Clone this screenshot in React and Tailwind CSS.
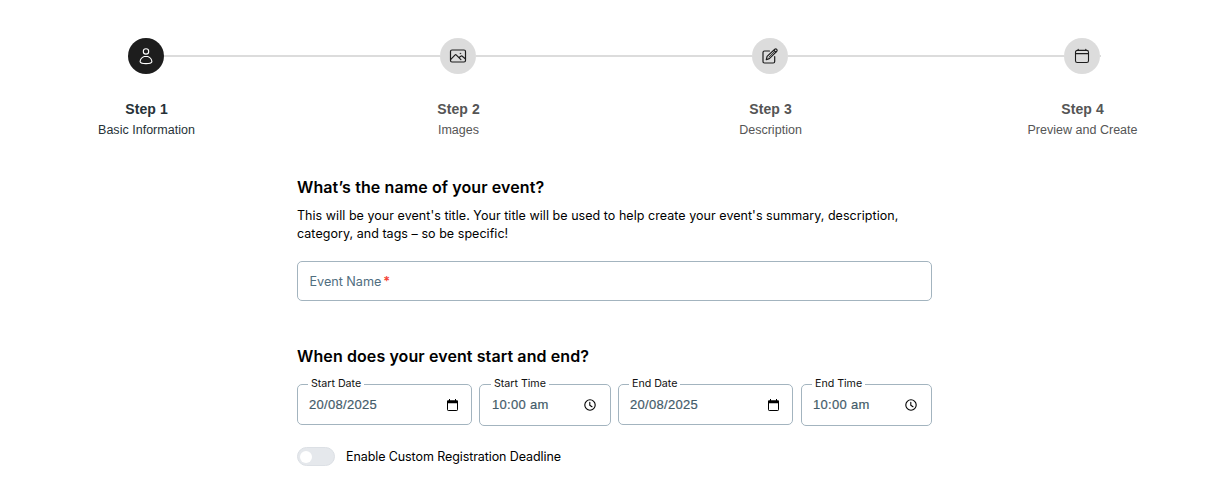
import React from "react";

const strokeProps = { fill: "none", stroke: "currentColor", strokeLinecap: "round", strokeLinejoin: "round" };

function PersonIcon() {
  return (
    <svg width="18" height="18" viewBox="0 0 18 18" strokeWidth="1.1" {...strokeProps}>
      <circle cx="9" cy="4.400" r="2.700" />
      <path d="M7.200 9.500h3.600c2.300.8 3.900 2.800 4.100 5.200-.5 1.300-2.900 1.900-5.900 1.900s-5.400-.6-5.900-1.900c.2-2.400 1.800-4.400 4.100-5.200z" />
    </svg>
  );
}

function ImageIcon() {
  return (
    <svg width="18" height="18" viewBox="0 0 18 18" strokeWidth="1.2" {...strokeProps}>
      <rect x="1.500" y="3" width="15" height="12" rx="1.500" />
      <path d="M1.800 12.300l4.100-4.200c.5-.5 1-.5 1.500 0l4.500 4.500M10 10.500l1.800-1.300c.5-.4 1-.4 1.500 0l3 2.500" />
      <circle cx="11.300" cy="6.500" r=".45" fill="currentColor" strokeWidth=".4" />
    </svg>
  );
}

function EditIcon() {
  return (
    <svg width="18" height="18" viewBox="0 0 18 18" strokeWidth="1.2" {...strokeProps}>
      <path d="M8.500 4H3.500Q2 4 2 5.500v9Q2 16 3.500 16h8.700q1.500 0 1.500-1.500V9.500" />
      <path d="M5.300 12.700l.8-3.300 7.700-7.200q1-.8 1.900.1t.1 1.900l-7.500 7.400zM12.700 3.200l2.200 2.100" />
      <path d="M8 10l5-5" strokeWidth=".8" />
    </svg>
  );
}

function CalendarIcon() {
  return (
    <svg width="18" height="18" viewBox="0 0 18 18" strokeWidth="1.100" {...strokeProps}>
      <rect x="2.500" y="3.400" width="13" height="12.100" rx="1.800" />
      <path d="M2.500 6.600h13M5.200 2.200v1.200M12.800 2.200v1.200" />
    </svg>
  );
}

function DatePickerIcon() {
  return (
    <svg width="11" height="13" viewBox="0 0 11 13" className="shrink-0 text-black">
      <path d="M.5 4v6.800q0 .7.7.7h8.600q.7 0 .7-.7V4" fill="none" stroke="currentColor" strokeWidth="1" />
      <path d="M0 4.300V2.200q0-1 1-1h1V0h1v1.200h5V0h1v1.200h1q1 0 1 1v2.100z" fill="currentColor" />
    </svg>
  );
}

function TimePickerIcon() {
  return (
    <svg width="12" height="12" viewBox="0 0 12 12" strokeWidth="1.100" className="shrink-0 text-black" {...strokeProps}>
      <circle cx="6" cy="6" r="5.200" />
      <path d="M5.800 3.200v3l2.200 1.500" />
    </svg>
  );
}

const steps = [
  { title: "Step 1", label: "Basic Information", Icon: PersonIcon, active: true },
  { title: "Step 2", label: "Images", Icon: ImageIcon },
  { title: "Step 3", label: "Description", Icon: EditIcon },
  { title: "Step 4", label: "Preview and Create", Icon: CalendarIcon },
];

function Stepper() {
  return (
    <div className="font-['Liberation_Sans',sans-serif]">
      <div className="ml-32 flex w-[973px] items-center">
        {steps.map(({ title, Icon, active }, i) => (
          <React.Fragment key={title}>
            <div className={`flex size-9 shrink-0 items-center justify-center rounded-full ${active ? "bg-[#1d1d1d] text-white" : "bg-[#dcdcdc] text-[#1d1d1d]"}`}>
              <Icon />
            </div>
            <div className={`h-0.5 bg-[#dcdcdc] ${i < 3 ? "flex-1" : "w-px"}`} />
          </React.Fragment>
        ))}
      </div>
      <div className="ml-[81px] mt-[27px] flex w-[1067px] justify-between">
        {steps.map(({ title, label, active }) => (
          <div key={title} className={`w-[131px] whitespace-nowrap text-center ${active ? "text-[#263238]" : "text-[#555]"}`}>
            <div className="text-sm font-bold leading-4 tracking-[0.1px]">{title}</div>
            <div className="mt-[5px] text-[12.5px] leading-4 tracking-[0.02px]">{label}</div>
          </div>
        ))}
      </div>
    </div>
  );
}

function PickerField({ label, value, type, size }) {
  return (
    <fieldset className={`min-w-0 rounded-[5px] border border-[#a3b4bf] ${size}`}>
      <legend className="-ml-px whitespace-nowrap px-[3px] text-[10.7px] leading-[14px] tracking-[-0.03px] text-[#111]">{label}</legend>
      <div className="flex h-[28px] items-center justify-between">
        <span className="whitespace-nowrap font-['Liberation_Sans',sans-serif] text-[13px] leading-4 tracking-[0.3px] text-[#445c6a] [-webkit-text-stroke:0.2px_#445c6a]">{value}</span>
        {type === "date" ? <DatePickerIcon /> : <TimePickerIcon />}
      </div>
    </fieldset>
  );
}

export default function App() {
  return (
    <main className="h-[494px] overflow-hidden bg-white pt-[38px] font-['Inter',sans-serif] text-black">
      <Stepper />
      <form className="ml-[297px] mt-[37px] w-[635px]">
        <h2 className="text-base font-semibold leading-6 tracking-[0.1px]">What’s the name of your event?</h2>
        <p className="mt-2 whitespace-nowrap text-[12.5px] leading-[18px] tracking-[0.045px]">
          This will be your event's title. Your title will be used to help create your event's summary, description,
          <br />
          category, and tags – so be specific!
        </p>
        <div className="mt-[18px] flex h-10 items-center rounded-[5px] border border-[#a3b4bf] pl-[11.5px] pt-0.5 text-[12.7px] tracking-[-0.05px] text-[#506e80]">
          Event Name<span className="ml-0.5 font-semibold text-[#f44336]">*</span>
        </div>
        <h2 className="mt-[43px] text-base font-semibold leading-6 tracking-[0.1px]">When does your event start and end?</h2>
        <div className="mt-[9px] flex items-start gap-[7px]">
          <PickerField label="Start Date" value="20/08/2025" type="date" size="h-[48px] w-[175px] pl-[11px] pr-[13px]" />
          <PickerField label="Start Time" value="10:00 am" type="time" size="h-[49px] w-[132px] pl-3 pr-[14px]" />
          <PickerField label="End Date" value="20/08/2025" type="date" size="h-[48px] w-[175px] pl-[11px] pr-[13px]" />
          <PickerField label="End Time" value="10:00 am" type="time" size="ml-px h-[49px] w-[131px] pl-[11px] pr-[14px]" />
        </div>
        <div className="mt-[21px] flex items-center">
          <div className="flex h-[19px] w-[38px] items-center rounded-full border border-[#dce0e5] bg-[#e5e8ec] pl-[2px]">
            <div className="size-3 rounded-full bg-white" />
          </div>
          <span className="ml-[11px] pt-px text-[12.5px] leading-[18px] tracking-[-0.09px]">Enable Custom Registration Deadline</span>
        </div>
      </form>
    </main>
  );
}
